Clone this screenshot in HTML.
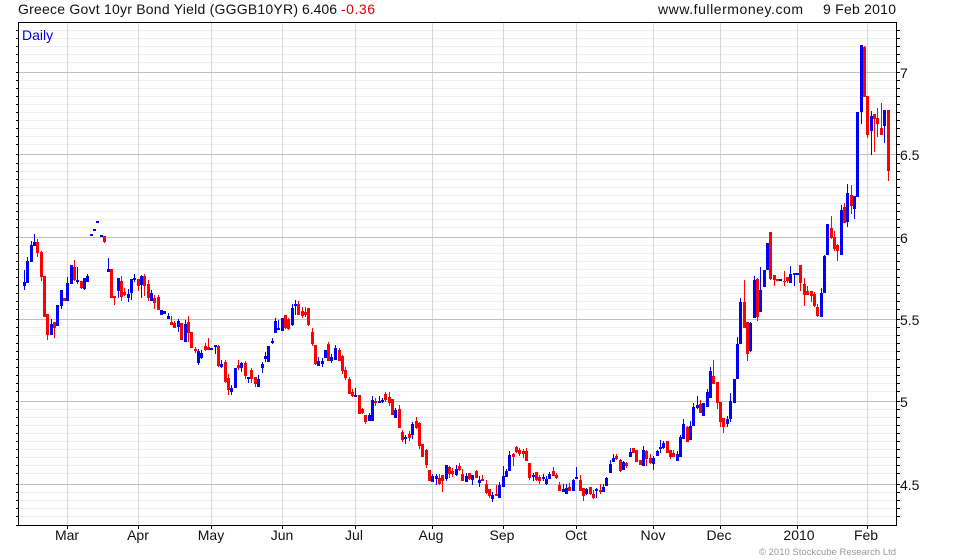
<!DOCTYPE html>
<html><head><meta charset="utf-8"><title>Greece Govt 10yr Bond Yield</title>
<style>
html,body{margin:0;padding:0;background:#fff;width:980px;height:560px;overflow:hidden}
svg{display:block}
text{font-family:"Liberation Sans",Arial,sans-serif;font-size:14px;fill:#111}
.m{text-anchor:middle}
</style></head><body>
<svg width="980" height="560" viewBox="0 0 980 560" xmlns="http://www.w3.org/2000/svg" shape-rendering="crispEdges">
<path fill="none" stroke="#f0f0f0" d="M18 30.5H896M18 38.5H896M18 46.5H896M18 54.5H896M18 62.5H896M18 80.5H896M18 88.5H896M18 96.5H896M18 104.5H896M18 112.5H896M18 120.5H896M18 128.5H896M18 136.5H896M18 144.5H896M18 163.5H896M18 171.5H896M18 179.5H896M18 187.5H896M18 195.5H896M18 203.5H896M18 211.5H896M18 219.5H896M18 227.5H896M18 245.5H896M18 253.5H896M18 261.5H896M18 269.5H896M18 277.5H896M18 285.5H896M18 293.5H896M18 301.5H896M18 309.5H896M18 327.5H896M18 335.5H896M18 343.5H896M18 351.5H896M18 359.5H896M18 367.5H896M18 375.5H896M18 383.5H896M18 391.5H896M18 409.5H896M18 417.5H896M18 425.5H896M18 433.5H896M18 441.5H896M18 449.5H896M18 457.5H896M18 465.5H896M18 473.5H896M18 492.5H896M18 500.5H896M18 508.5H896M18 516.5H896"/>
<path fill="none" stroke="#d8d8d8" d="M67.5 23V525M138.5 23V525M211.5 23V525M282.5 23V525M355.5 23V525M432.5 23V525M503.5 23V525M576.5 23V525M653.5 23V525M720.5 23V525M797.5 23V525M867.5 23V525"/>
<path fill="none" stroke="#c0c0c0" d="M18 72.5H896M18 154.5H896M18 237.5H896M18 319.5H896M18 401.5H896M18 484.5H896"/>
<!-- blue wicks -->
<path fill="none" stroke="#0000ff" stroke-width="1" d="M24.5 270V290M27.5 257V283M31.5 241V262M34.5 234V246M51.5 319V335M61.5 290V309M67.5 277V301M77.5 267V284M84.5 278V290M87.5 274V282M108.5 258V272M118.5 278V298M128.5 289V302M131.5 279V300M134.5 274V282M141.5 275V298M151.5 290V301M168.5 313V319M178.5 319V332M185.5 320V342M198.5 349V365M201.5 350V359M215.5 345V354M221.5 360V368M231.5 385V395M241.5 362V372M248.5 377V383M258.5 375V387M262.5 362V373M265.5 352V362M272.5 338V344M275.5 318V333M278.5 320V330M292.5 304V326M295.5 300V315M318.5 357V366M322.5 358V367M331.5 354V363M335.5 345V360M355.5 388V397M369.5 413V421M372.5 396V421M379.5 396V403M382.5 398V403M395.5 408V418M405.5 435V444M412.5 422V439M432.5 474V482M436.5 474V485M446.5 465V481M456.5 465V476M466.5 473V482M472.5 475V485M479.5 476V487M492.5 492V502M499.5 482V498M503.5 466V487M506.5 469V477M509.5 451V471M533.5 473V481M543.5 474V481M546.5 476V485M549.5 472V479M563.5 484V492M566.5 484V494M573.5 479V491M576.5 467V479M586.5 488V495M596.5 488V498M603.5 484V492M606.5 477V486M610.5 460V473M613.5 454V462M623.5 461V470M630.5 448V457M643.5 446V466M653.5 456V470M657.5 450V456M660.5 440V453M663.5 441V449M677.5 451V461M680.5 435V457M683.5 419V439M690.5 421V440M693.5 403V426M697.5 396V409M707.5 389V407M710.5 367V398M727.5 416V427M730.5 393V422M737.5 337V379M740.5 298V344M750.5 322V352M754.5 276V318M760.5 267V312M790.5 266V283M794.5 273V286M821.5 288V317M824.5 255V293M841.5 205V255M847.5 184V227M854.5 196V219M861.5 45V124M871.5 111V155M884.5 110V143"/>
<!-- red wicks -->
<path fill="none" stroke="#ff0000" stroke-width="1" d="M37.5 239V257M41.5 251V281M47.5 314V340M54.5 322V338M74.5 260V281M81.5 281V289M104.5 236V243M114.5 296V305M121.5 276V301M124.5 288V296M138.5 279V291M144.5 274V296M148.5 280V301M154.5 295V309M158.5 295V310M171.5 316V325M174.5 321V328M188.5 316V342M195.5 347V353M205.5 343V351M208.5 338V350M218.5 345V367M225.5 360V383M228.5 374V395M238.5 360V370M245.5 361V379M251.5 368V383M255.5 377V387M285.5 315V329M288.5 318V330M298.5 301V315M302.5 307V318M305.5 307V317M308.5 308V326M312.5 328V346M315.5 345V365M328.5 342V361M339.5 348V361M342.5 355V374M345.5 367V380M349.5 377V394M352.5 389V397M362.5 408V414M365.5 415V424M375.5 398V406M385.5 392V402M389.5 392V406M399.5 405V428M402.5 430V442M409.5 431V441M416.5 417V429M419.5 422V449M426.5 449V468M439.5 474V485M442.5 475V492M449.5 466V478M452.5 468V477M459.5 463V471M462.5 469V481M469.5 473V480M476.5 470V478M482.5 475V481M486.5 480V494M489.5 489V498M496.5 485V496M513.5 453V466M516.5 446V453M519.5 448V456M523.5 449V458M526.5 448V461M529.5 463V480M536.5 472V481M539.5 475V484M553.5 467V476M556.5 473V479M559.5 482V491M569.5 483V491M580.5 475V491M583.5 488V501M590.5 487V495M593.5 490V499M600.5 484V494M616.5 454V460M620.5 459V472M626.5 462V468M633.5 448V453M640.5 460V465M646.5 450V466M650.5 454V464M670.5 450V459M673.5 450V457M687.5 426V442M700.5 400V413M713.5 360V384M717.5 382V409M720.5 402V427M723.5 418V433M744.5 280V328M747.5 322V361M757.5 278V321M770.5 232V280M774.5 275V286M784.5 271V286M787.5 277V283M800.5 265V291M804.5 278V306M807.5 286V295M811.5 291V302M814.5 292V307M817.5 304V317M831.5 216V239M834.5 231V251M837.5 244V261M844.5 203V223M851.5 185V214M864.5 46V97M867.5 96V138M874.5 114V152M877.5 108V137M881.5 103V135M888.5 110V181"/>
<!-- blue bodies -->
<path fill="none" stroke="#0000ff" stroke-width="3" d="M24.5 282V286M27.5 261V283M31.5 245V262M34.5 242V246M51.5 324V335M57.5 305V326M61.5 290V306M67.5 283V301M71.5 265V284M77.5 280V282M84.5 278V289M87.5 276V282M91.5 234V236M94.5 229V231M97.5 221V223M101.5 235V237M108.5 269V272M118.5 278V291M128.5 294V298M131.5 279V293M134.5 278V280M141.5 276V285M151.5 293V301M161.5 310V315M164.5 311V314M168.5 316V319M178.5 321V327M185.5 324V342M198.5 351V363M201.5 353V358M211.5 348V350M215.5 345V347M221.5 364V367M231.5 388V392M235.5 368V388M241.5 363V368M248.5 377V379M258.5 379V387M262.5 364V368M265.5 356V359M268.5 346V362M272.5 341V343M275.5 321V333M278.5 328V330M282.5 318V331M292.5 308V325M295.5 304V306M318.5 361V366M322.5 361V364M325.5 350V358M331.5 357V361M335.5 348V360M355.5 395V397M369.5 415V421M372.5 400V421M379.5 401V403M382.5 400V402M395.5 410V418M405.5 437V439M412.5 424V435M432.5 476V482M436.5 476V479M446.5 465V479M456.5 469V475M466.5 476V482M472.5 475V480M479.5 480V483M492.5 495V499M499.5 485V498M503.5 476V487M506.5 471V477M509.5 455V471M533.5 475V477M543.5 477V479M546.5 479V484M549.5 474V479M563.5 489V492M566.5 488V494M573.5 480V491M576.5 477V479M586.5 489V494M596.5 489V491M603.5 487V492M606.5 478V486M610.5 464V473M613.5 458V462M623.5 462V470M630.5 452V457M643.5 450V466M653.5 458V464M657.5 451V456M660.5 447V449M663.5 443V448M677.5 454V461M680.5 437V457M683.5 424V439M690.5 426V440M693.5 407V426M697.5 405V408M703.5 403V416M707.5 392V407M710.5 371V398M727.5 419V424M730.5 401V419M734.5 379V403M737.5 344V379M740.5 302V344M750.5 323V351M754.5 280V318M760.5 290V312M764.5 270V287M767.5 243V270M780.5 279V281M790.5 274V283M794.5 273V275M797.5 273V275M821.5 293V317M824.5 256V293M827.5 224V255M841.5 210V255M847.5 193V222M854.5 196V209M857.5 112V197M861.5 45V112M871.5 116V131M884.5 110V126"/>
<!-- red bodies -->
<path fill="none" stroke="#ff0000" stroke-width="3" d="M37.5 242V253M41.5 252V277M44.5 276V317M47.5 314V335M54.5 322V328M64.5 298V301M74.5 267V280M81.5 281V288M104.5 236V242M111.5 269V298M114.5 296V298M121.5 281V297M124.5 292V295M138.5 279V286M144.5 276V286M148.5 284V298M154.5 298V303M158.5 297V310M171.5 322V325M174.5 323V328M181.5 323V340M188.5 322V333M191.5 332V348M195.5 349V351M205.5 346V350M208.5 347V350M218.5 346V366M225.5 362V382M228.5 378V390M238.5 365V368M245.5 363V376M251.5 370V379M255.5 377V384M285.5 315V328M288.5 319V329M298.5 304V315M302.5 311V316M305.5 312V315M308.5 308V325M312.5 332V344M315.5 345V364M328.5 344V361M339.5 350V361M342.5 356V371M345.5 370V378M349.5 379V394M352.5 392V396M359.5 395V414M362.5 409V413M365.5 415V422M375.5 401V403M385.5 394V400M389.5 397V403M392.5 399V415M399.5 409V428M402.5 432V440M409.5 434V438M416.5 421V428M419.5 423V446M422.5 444V457M426.5 450V465M429.5 470V481M439.5 478V484M442.5 475V481M449.5 467V474M452.5 471V474M459.5 466V470M462.5 474V481M469.5 473V479M476.5 471V478M482.5 479V481M486.5 484V493M489.5 489V496M496.5 494V496M513.5 454V457M516.5 447V452M519.5 450V454M523.5 451V454M526.5 451V461M529.5 463V478M536.5 472V480M539.5 477V481M553.5 471V476M556.5 475V478M559.5 485V491M569.5 487V491M580.5 480V491M583.5 488V496M590.5 487V494M593.5 494V498M600.5 490V492M616.5 456V459M620.5 460V471M626.5 463V466M633.5 448V453M636.5 450V462M640.5 460V465M646.5 451V459M650.5 458V463M667.5 441V453M670.5 450V457M673.5 453V457M687.5 427V442M700.5 404V413M713.5 376V384M717.5 382V403M720.5 402V422M723.5 418V427M744.5 302V328M747.5 322V354M757.5 279V317M770.5 232V279M774.5 275V280M777.5 279V281M784.5 281V282M787.5 277V281M800.5 265V283M804.5 284V295M807.5 291V295M811.5 291V296M814.5 294V306M817.5 307V316M831.5 228V238M834.5 237V249M837.5 245V251M844.5 207V223M851.5 195V206M864.5 47V97M867.5 96V135M874.5 114V119M877.5 118V124M881.5 128V135M888.5 110V171"/>
<!-- ticks + frame -->
<path fill="none" stroke="#000" d="M16 30.5H18M16 38.5H18M16 46.5H18M16 54.5H18M16 62.5H18M16 72.5H18M16 80.5H18M16 88.5H18M16 96.5H18M16 104.5H18M16 112.5H18M16 120.5H18M16 128.5H18M16 136.5H18M16 144.5H18M16 154.5H18M16 163.5H18M16 171.5H18M16 179.5H18M16 187.5H18M16 195.5H18M16 203.5H18M16 211.5H18M16 219.5H18M16 227.5H18M16 237.5H18M16 245.5H18M16 253.5H18M16 261.5H18M16 269.5H18M16 277.5H18M16 285.5H18M16 293.5H18M16 301.5H18M16 309.5H18M16 319.5H18M16 327.5H18M16 335.5H18M16 343.5H18M16 351.5H18M16 359.5H18M16 367.5H18M16 375.5H18M16 383.5H18M16 391.5H18M16 401.5H18M16 409.5H18M16 417.5H18M16 425.5H18M16 433.5H18M16 441.5H18M16 449.5H18M16 457.5H18M16 465.5H18M16 473.5H18M16 484.5H18M16 492.5H18M16 500.5H18M16 508.5H18M16 516.5H18M16 525.5H18"/>
<path fill="none" stroke="#000" d="M897 30.5H900M897 38.5H900M897 46.5H900M897 54.5H900M897 62.5H900M897 72.5H900M897 80.5H900M897 88.5H900M897 96.5H900M897 104.5H900M897 112.5H900M897 120.5H900M897 128.5H900M897 136.5H900M897 144.5H900M897 154.5H900M897 163.5H900M897 171.5H900M897 179.5H900M897 187.5H900M897 195.5H900M897 203.5H900M897 211.5H900M897 219.5H900M897 227.5H900M897 237.5H900M897 245.5H900M897 253.5H900M897 261.5H900M897 269.5H900M897 277.5H900M897 285.5H900M897 293.5H900M897 301.5H900M897 309.5H900M897 319.5H900M897 327.5H900M897 335.5H900M897 343.5H900M897 351.5H900M897 359.5H900M897 367.5H900M897 375.5H900M897 383.5H900M897 391.5H900M897 401.5H900M897 409.5H900M897 417.5H900M897 425.5H900M897 433.5H900M897 441.5H900M897 449.5H900M897 457.5H900M897 465.5H900M897 473.5H900M897 484.5H900M897 492.5H900M897 500.5H900M897 508.5H900M897 516.5H900"/>
<path fill="none" stroke="#000" d="M67.5 526V529M138.5 526V529M211.5 526V529M282.5 526V529M355.5 526V529M432.5 526V529M503.5 526V529M576.5 526V529M653.5 526V529M720.5 526V529M797.5 526V529M867.5 526V529"/>
<rect x="18.5" y="22.5" width="878" height="503" fill="none" stroke="#000"/>
<text x="18" y="14" textLength="280" lengthAdjust="spacing">Greece Govt 10yr Bond Yield (GGGB10YR)</text>
<text x="302" y="14" textLength="35" lengthAdjust="spacing">6.406</text>
<text x="341" y="14" textLength="34" lengthAdjust="spacing" style="fill:#e00000">-0.36</text>
<text x="658" y="14" textLength="145" lengthAdjust="spacing">www.fullermoney.com</text>
<text x="823" y="14" textLength="73" lengthAdjust="spacing">9 Feb 2010</text>
<text x="22" y="40" style="fill:#0000e0">Daily</text>
<text x="900" y="78">7</text>
<text x="900" y="160">6.5</text>
<text x="900" y="243">6</text>
<text x="900" y="325">5.5</text>
<text x="900" y="407">5</text>
<text x="900" y="490">4.5</text>
<text class="m" x="67" y="540">Mar</text>
<text class="m" x="138" y="540">Apr</text>
<text class="m" x="211" y="540">May</text>
<text class="m" x="282" y="540">Jun</text>
<text class="m" x="354" y="540">Jul</text>
<text class="m" x="431" y="540">Aug</text>
<text class="m" x="502" y="540">Sep</text>
<text class="m" x="576" y="540">Oct</text>
<text class="m" x="653" y="540">Nov</text>
<text class="m" x="719" y="540">Dec</text>
<text class="m" x="799" y="540">2010</text>
<text class="m" x="866" y="540">Feb</text>
<text x="759" y="555" textLength="137" lengthAdjust="spacing" style="font-size:9.5px;fill:#999">© 2010 Stockcube Research Ltd</text>
</svg>
</body></html>
